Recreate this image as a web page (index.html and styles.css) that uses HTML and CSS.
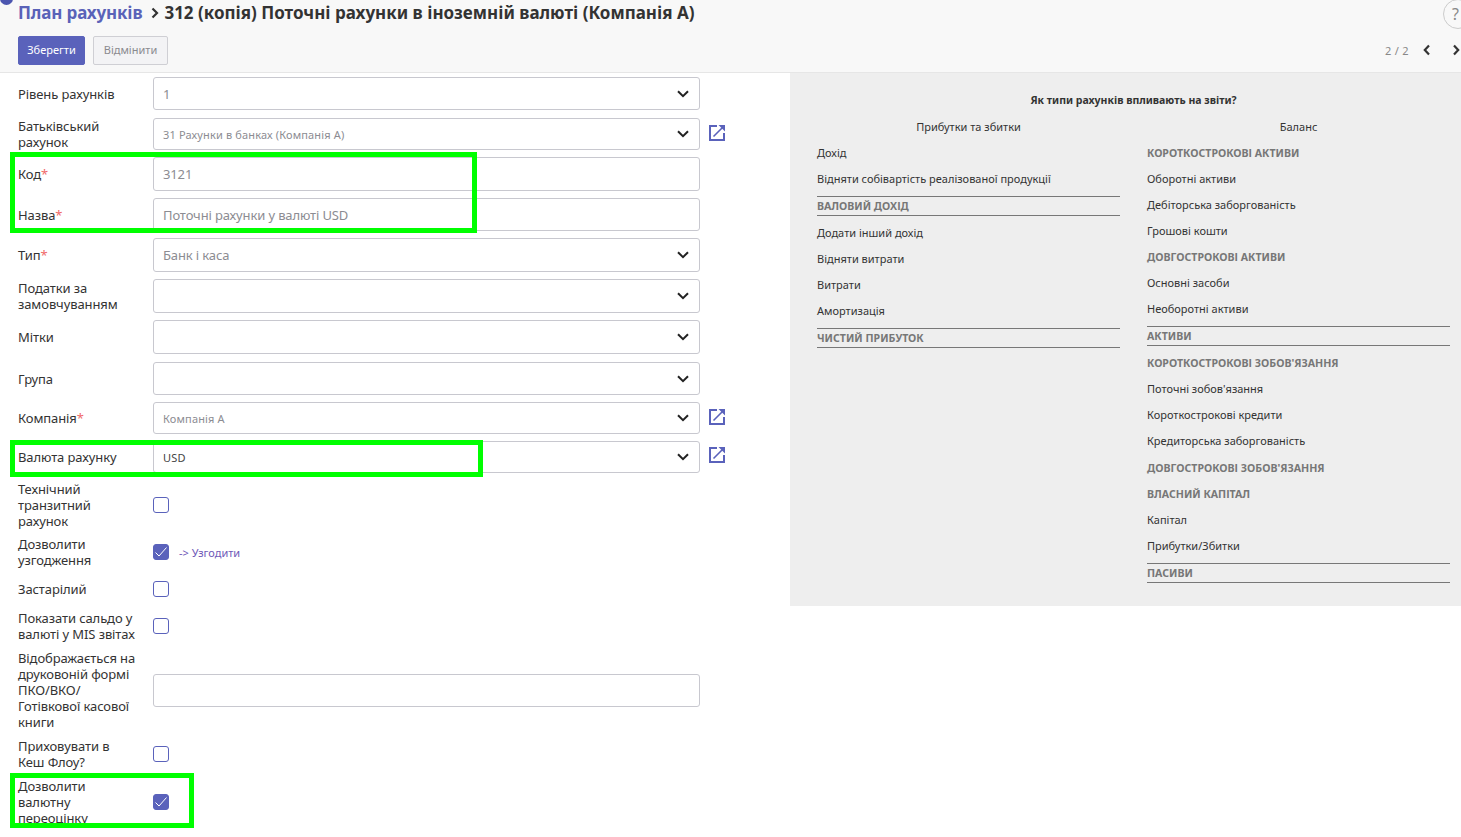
FILE: index.html
```html
<!DOCTYPE html>
<html lang="uk">
<head>
<meta charset="utf-8">
<title>План рахунків</title>
<link rel="stylesheet" href="styles.css">
</head>
<body>
<svg class="defs" width="0" height="0" aria-hidden="true">
  <symbol id="chev" viewBox="0 0 12 8"><path d="M1 1.2 6 6.2 11 1.2" fill="none" stroke="currentColor" stroke-width="2"/></symbol>
  <symbol id="ext" viewBox="0 0 16 16"><path d="M8 1H1v14h14V8" fill="none" stroke="currentColor" stroke-width="2"/><path d="M4.5 11.5 14 2" fill="none" stroke="currentColor" stroke-width="1.6"/><path d="M9.5 0H16v6.5z" fill="currentColor"/></symbol>
  <symbol id="tick" viewBox="0 0 14 14"><path d="M1.5 7.5 5 11 12.5 2.5" fill="none" stroke="#fff" stroke-width="1"/></symbol>
</svg>

<header class="head">
  <span class="corner-dot"></span>
  <h1 class="crumbs"><a class="crumb-link">План рахунків</a><svg class="crumb-sep" viewBox="0 0 8 12"><path d="M1.5 1.5 6 6 1.5 10.5" fill="none" stroke="currentColor" stroke-width="2.2"/></svg><span>312 (копія) Поточні рахунки в іноземній валюті (Компанія А)</span></h1>
  <div class="actions">
    <button class="btn btn-save">Зберегти</button>
    <button class="btn btn-cancel">Відмінити</button>
    <div class="pager">
      <span class="pager-count">2 / 2</span>
      <svg class="pager-arrow" viewBox="0 0 8 12"><path d="M6 1.5 1.8 6 6 10.5" fill="none" stroke="currentColor" stroke-width="2.2"/></svg>
      <svg class="pager-arrow pager-next" viewBox="0 0 8 12"><path d="M2 1.5 6.2 6 2 10.5" fill="none" stroke="currentColor" stroke-width="2.2"/></svg>
    </div>
  </div>
  <span class="help">?</span>
</header>

<main class="content">
  <form class="form">
    <div class="row h33 gap8"><label class="lbl">Рівень рахунків</label><div class="field">1<svg class="chev"><use href="#chev"/></svg></div></div>
    <div class="row h32"><label class="lbl">Батьківський<br>рахунок</label><div class="field small">31 Рахунки в банках (Компанія А)<svg class="chev"><use href="#chev"/></svg></div><svg class="ext"><use href="#ext"/></svg></div>
    <div class="row h34"><label class="lbl">Код<i>*</i></label><div class="field">3121</div></div>
    <div class="row h33"><label class="lbl">Назва<i>*</i></label><div class="field">Поточні рахунки у валюті USD</div></div>
    <div class="row h34"><label class="lbl">Тип<i>*</i></label><div class="field">Банк і каса<svg class="chev"><use href="#chev"/></svg></div></div>
    <div class="row h34"><label class="lbl">Податки за<br>замовчуванням</label><div class="field"><svg class="chev"><use href="#chev"/></svg></div></div>
    <div class="row h34 gap8"><label class="lbl">Мітки</label><div class="field"><svg class="chev"><use href="#chev"/></svg></div></div>
    <div class="row h33"><label class="lbl">Група</label><div class="field"><svg class="chev"><use href="#chev"/></svg></div></div>
    <div class="row h32"><label class="lbl">Компанія<i>*</i></label><div class="field small">Компанія А<svg class="chev"><use href="#chev"/></svg></div><svg class="ext"><use href="#ext"/></svg></div>
    <div class="row h32 gap8"><label class="lbl">Валюта рахунку</label><div class="field small dark">USD<svg class="chev"><use href="#chev"/></svg></div><svg class="ext ext-up"><use href="#ext"/></svg></div>
    <div class="row"><label class="lbl">Технічний<br>транзитний<br>рахунок</label><span class="check"></span></div>
    <div class="row h32 gap8"><label class="lbl">Дозволити<br>узгодження</label><span class="check on"><svg class="tick"><use href="#tick"/></svg></span><a class="reconcile">-&gt; Узгодити</a></div>
    <div class="row h26 gap8"><label class="lbl">Застарілий</label><span class="check"></span></div>
    <div class="row gap8"><label class="lbl">Показати сальдо у<br>валюті у MIS звітах</label><span class="check"></span></div>
    <div class="row gap8"><label class="lbl">Відображається на<br>друковоній формі<br>ПКО/ВКО/<br>Готівкової касової<br>книги</label><div class="field h33"></div></div>
    <div class="row gap8"><label class="lbl">Приховувати в<br>Кеш Флоу?</label><span class="check"></span></div>
    <div class="row"><label class="lbl">Дозволити<br>валютну<br>переоцінку</label><span class="check on"><svg class="tick"><use href="#tick"/></svg></span></div>
  </form>

  <aside class="help-panel">
    <h2 class="panel-title">Як типи рахунків впливають на звіти?</h2>
    <div class="panel-cols">
      <div class="col">
        <div class="col-head">Прибутки та збитки</div>
        <div class="item">Дохід</div>
        <div class="item">Відняти собівартість реалізованої продукції</div>
        <div class="total">ВАЛОВИЙ ДОХІД</div>
        <div class="item">Додати інший дохід</div>
        <div class="item">Відняти витрати</div>
        <div class="item">Витрати</div>
        <div class="item">Амортизація</div>
        <div class="total">ЧИСТИЙ ПРИБУТОК</div>
      </div>
      <div class="col">
        <div class="col-head">Баланс</div>
        <div class="item sub">КОРОТКОСТРОКОВІ АКТИВИ</div>
        <div class="item">Оборотні активи</div>
        <div class="item">Дебіторська заборгованість</div>
        <div class="item">Грошові кошти</div>
        <div class="item sub">ДОВГОСТРОКОВІ АКТИВИ</div>
        <div class="item">Основні засоби</div>
        <div class="item">Необоротні активи</div>
        <div class="total">АКТИВИ</div>
        <div class="item sub">КОРОТКОСТРОКОВІ ЗОБОВ'ЯЗАННЯ</div>
        <div class="item">Поточні зобов'язання</div>
        <div class="item">Короткострокові кредити</div>
        <div class="item">Кредиторська заборгованість</div>
        <div class="item sub sub-spaced">ДОВГОСТРОКОВІ ЗОБОВ'ЯЗАННЯ</div>
        <div class="item sub">ВЛАСНИЙ КАПІТАЛ</div>
        <div class="item">Капітал</div>
        <div class="item">Прибутки/Збитки</div>
        <div class="total">ПАСИВИ</div>
      </div>
    </div>
  </aside>
</main>

<div class="mark mark-a"></div>
<div class="mark mark-b"></div>
<div class="mark mark-c"></div>
</body>
</html>
```

FILE: styles.css
```css
* { box-sizing: border-box; }
html, body { margin: 0; height: 837px; overflow: hidden; }
body { position: relative; background: #fff; color: #333; font-family: "Noto Sans", "Open Sans", sans-serif; font-size: 13px; }
.defs { position: absolute; }

.head { position: relative; height: 73px; padding: 0 0 0 18px; background: #f8f8f8; border-bottom: 1px solid #e6e6e6; overflow: hidden; }
.corner-dot { position: absolute; left: 0; top: -8px; width: 13px; height: 13px; border-radius: 50%; background: #4c56b0; }
.crumbs { margin: 0; height: 25px; display: flex; align-items: center; font-size: 17px; font-weight: 700; color: #333; white-space: nowrap; }
.crumb-link { color: #5a62b8; letter-spacing: -.15px; }
.crumb-sep { width: 8px; height: 12px; margin: 1px 5px 0 9px; color: #333; }
.actions { display: flex; align-items: center; margin-top: 11px; height: 29px; }
.btn { height: 29px; font: inherit; font-size: 11px; border-radius: 2px; padding: 0 0 2px; }
.btn-save { width: 67px; background: #5a62bb; color: #fff; border: 1px solid #5a62bb; }
.btn-cancel { width: 75px; margin-left: 8px; background: #f3f3f5; color: #8a8a8f; border: 1px solid #cfcfd4; }
.pager { margin: 0 0 2px auto; display: flex; align-items: center; color: #333; width: 76px; height: 27px; }
.pager-count { color: #888; font-size: 11px; letter-spacing: .3px; white-space: nowrap; margin-top: 1px; }
.pager-arrow { width: 8px; height: 12px; margin-left: 14px; flex: none; }
.pager-next { margin-left: 21px; }
.help { position: absolute; left: 1443px; top: -1px; width: 30px; height: 30px; border: 1px solid #ccc; border-radius: 50%; color: #888; font-size: 16px; line-height: 28px; padding-left: 8px; }

.content { display: flex; align-items: flex-start; }
.form { width: 790px; padding: 4px 0 0 18px; flex: none; }
.row { display: flex; align-items: center; margin-bottom: 7px; }
.gap8 { margin-bottom: 8px; }
.h26 { height: 26px; }
.h32 { height: 32px; }
.h33 { height: 33px; }
.h34 { height: 34px; }
.lbl { width: 135px; flex: none; line-height: 16px; letter-spacing: -.1px; color: #333; white-space: nowrap; }
.lbl i { color: #f06a6a; font-style: normal; }
.field { position: relative; width: 547px; height: 100%; flex: none; display: flex; align-items: center; padding: 0 9px; border: 1px solid #c8c8cf; border-radius: 3px; color: #8c8c92; letter-spacing: -.13px; background: #fff; }
.field.h33 { height: 33px; }
.small { font-size: 11px; letter-spacing: .15px; }
.dark { color: #444; }
.chev { position: absolute; right: 10px; top: 50%; margin-top: -4px; width: 12px; height: 8px; color: #222; }
.ext { width: 16px; height: 16px; margin: 0 0 2px 9px; color: #5a62bb; flex: none; }
.ext-up { margin-bottom: 4px; }
.check { width: 16px; height: 16px; flex: none; border: 1px solid #5a62bb; border-radius: 3px; background: #fff; }
.check.on { background: #5a62bb; }
.tick { display: block; width: 14px; height: 14px; }
.reconcile { margin-left: 10px; font-size: 11px; color: #6f58b8; }

.help-panel { width: 671px; height: 533px; padding: 20px 11px 0 27px; background: #eee; color: #333; font-size: 11px; }
.panel-title { margin: 0 0 7px; font-size: 10.5px; line-height: 14px; font-weight: 700; text-align: center; }
.panel-cols { display: grid; grid-template-columns: 303px 303px; column-gap: 27px; }
.col-head { height: 26px; line-height: 26px; text-align: center; }
.item { height: 26px; line-height: 26px; white-space: nowrap; }
.sub { font-size: 10.6px; font-weight: 700; color: #777; }
.sub-spaced { margin-top: 1px; }
.total { height: 20px; margin: 4px 0; font-size: 10.6px; line-height: 19px; font-weight: 700; color: #777; border-top: 1px solid #777; border-bottom: 1px solid #777; }

.mark { position: absolute; border: 5px solid #00ff00; }
.mark-a { left: 10px; top: 152px; width: 467px; height: 81px; }
.mark-b { left: 10px; top: 440px; width: 473px; height: 37px; }
.mark-c { left: 10px; top: 773px; width: 184px; height: 55px; }
```
